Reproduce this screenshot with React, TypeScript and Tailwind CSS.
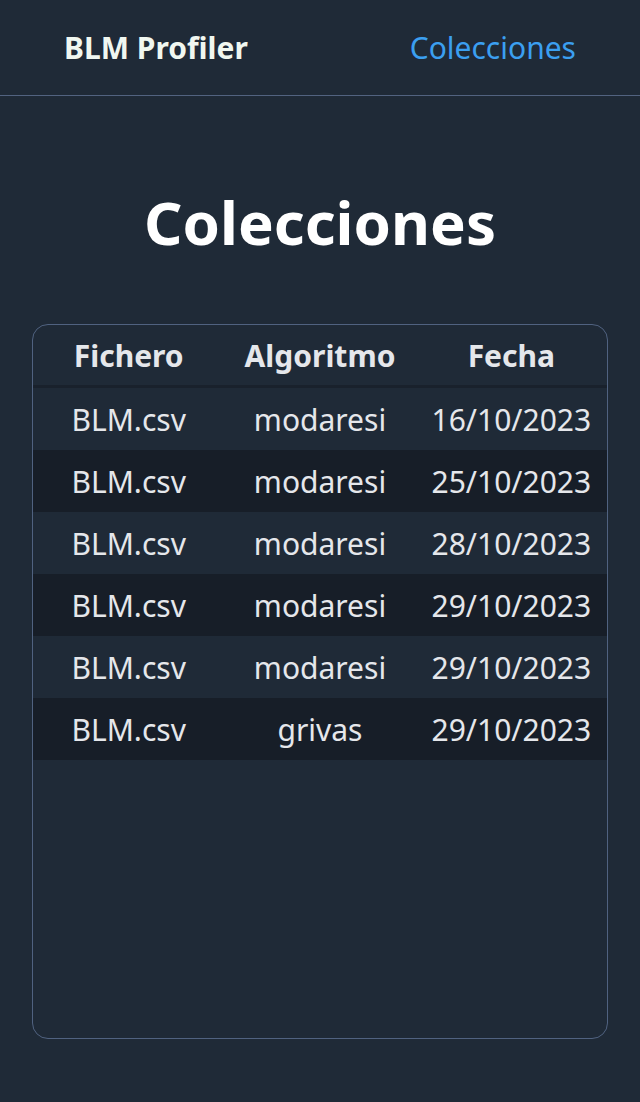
const rows = [
  { file: 'BLM.csv', algo: 'modaresi', date: '16/10/2023' },
  { file: 'BLM.csv', algo: 'modaresi', date: '25/10/2023' },
  { file: 'BLM.csv', algo: 'modaresi', date: '28/10/2023' },
  { file: 'BLM.csv', algo: 'modaresi', date: '29/10/2023' },
  { file: 'BLM.csv', algo: 'modaresi', date: '29/10/2023' },
  { file: 'BLM.csv', algo: 'grivas', date: '29/10/2023' },
]

export default function App() {
  return (
    <div className="min-h-screen bg-[#1f2a37] text-[#e5e7eb] font-['Noto_Sans',sans-serif]">
      {/* Nav */}
      <nav className="h-[96px] px-16 flex items-center justify-between border-b border-[#526380]">
        <span className="text-[30px] font-bold text-[#f0f7f0]">BLM Profiler</span>
        <a className="text-[30px] text-[#3b9ff0]">Colecciones</a>
      </nav>

      <main className="px-8 pb-16">
        <h1 className="mt-[96px] mb-[72px] text-center text-[60px] leading-none font-bold text-white">Colecciones</h1>

        <div className="h-[715px] border border-[#506280] rounded-2xl overflow-hidden">
          <div className="grid grid-cols-3 h-[63px] items-center text-[30px] font-bold text-center border-b-[3px] border-[#19212c]">
            <span>Fichero</span>
            <span>Algoritmo</span>
            <span>Fecha</span>
          </div>
          {rows.map((r, i) => (
            <div
              key={i}
              className={`grid grid-cols-3 h-[62px] items-center text-[30px] text-center ${
                i % 2 === 0 ? 'bg-[#1f2a37]' : 'bg-[#171e28]'
              }`}
            >
              <span>{r.file}</span>
              <span>{r.algo}</span>
              <span>{r.date}</span>
            </div>
          ))}
        </div>
      </main>
    </div>
  )
}
